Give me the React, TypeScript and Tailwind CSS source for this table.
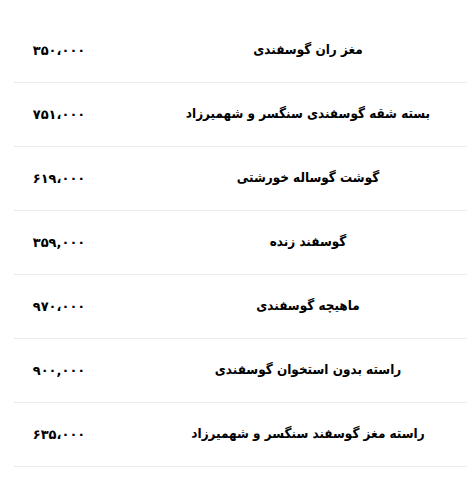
import React from 'react';

const rows = [
  { name: 'مغز ران گوسفندی', price: '۳۵۰،۰۰۰' },
  { name: 'بسته شقه گوسفندی سنگسر و شهمیرزاد', price: '۷۵۱،۰۰۰' },
  { name: 'گوشت گوساله خورشتی', price: '۶۱۹،۰۰۰' },
  { name: 'گوسفند زنده', price: '۳۵۹,۰۰۰' },
  { name: 'ماهیچه گوسفندی', price: '۹۷۰،۰۰۰' },
  { name: 'راسته بدون استخوان گوسفندی', price: '۹۰۰,۰۰۰' },
  { name: 'راسته مغز گوسفند سنگسر و شهمیرزاد', price: '۶۳۵،۰۰۰' },
];

export default function App() {
  return (
    <div className="w-[467px] h-[477px] overflow-hidden bg-white pt-[19px]">
      <div dir="rtl" className="ml-[14px] w-[498px] font-bold text-black">
        {rows.map((row, i) => (
          <div key={i} className="flex h-[64px] border-b border-[#ebebeb]">
            <div
              className="flex w-[408px] items-center justify-center text-[13.4px]"
              style={{ fontFamily: '"DejaVu Sans Condensed", "DejaVu Sans", sans-serif' }}
            >
              {row.name}
            </div>
            <div
              className="flex w-[90px] items-center justify-center text-[13px]"
              style={{ fontFamily: '"DejaVu Sans", sans-serif' }}
            >
              {row.price}
            </div>
          </div>
        ))}
      </div>
    </div>
  );
}
